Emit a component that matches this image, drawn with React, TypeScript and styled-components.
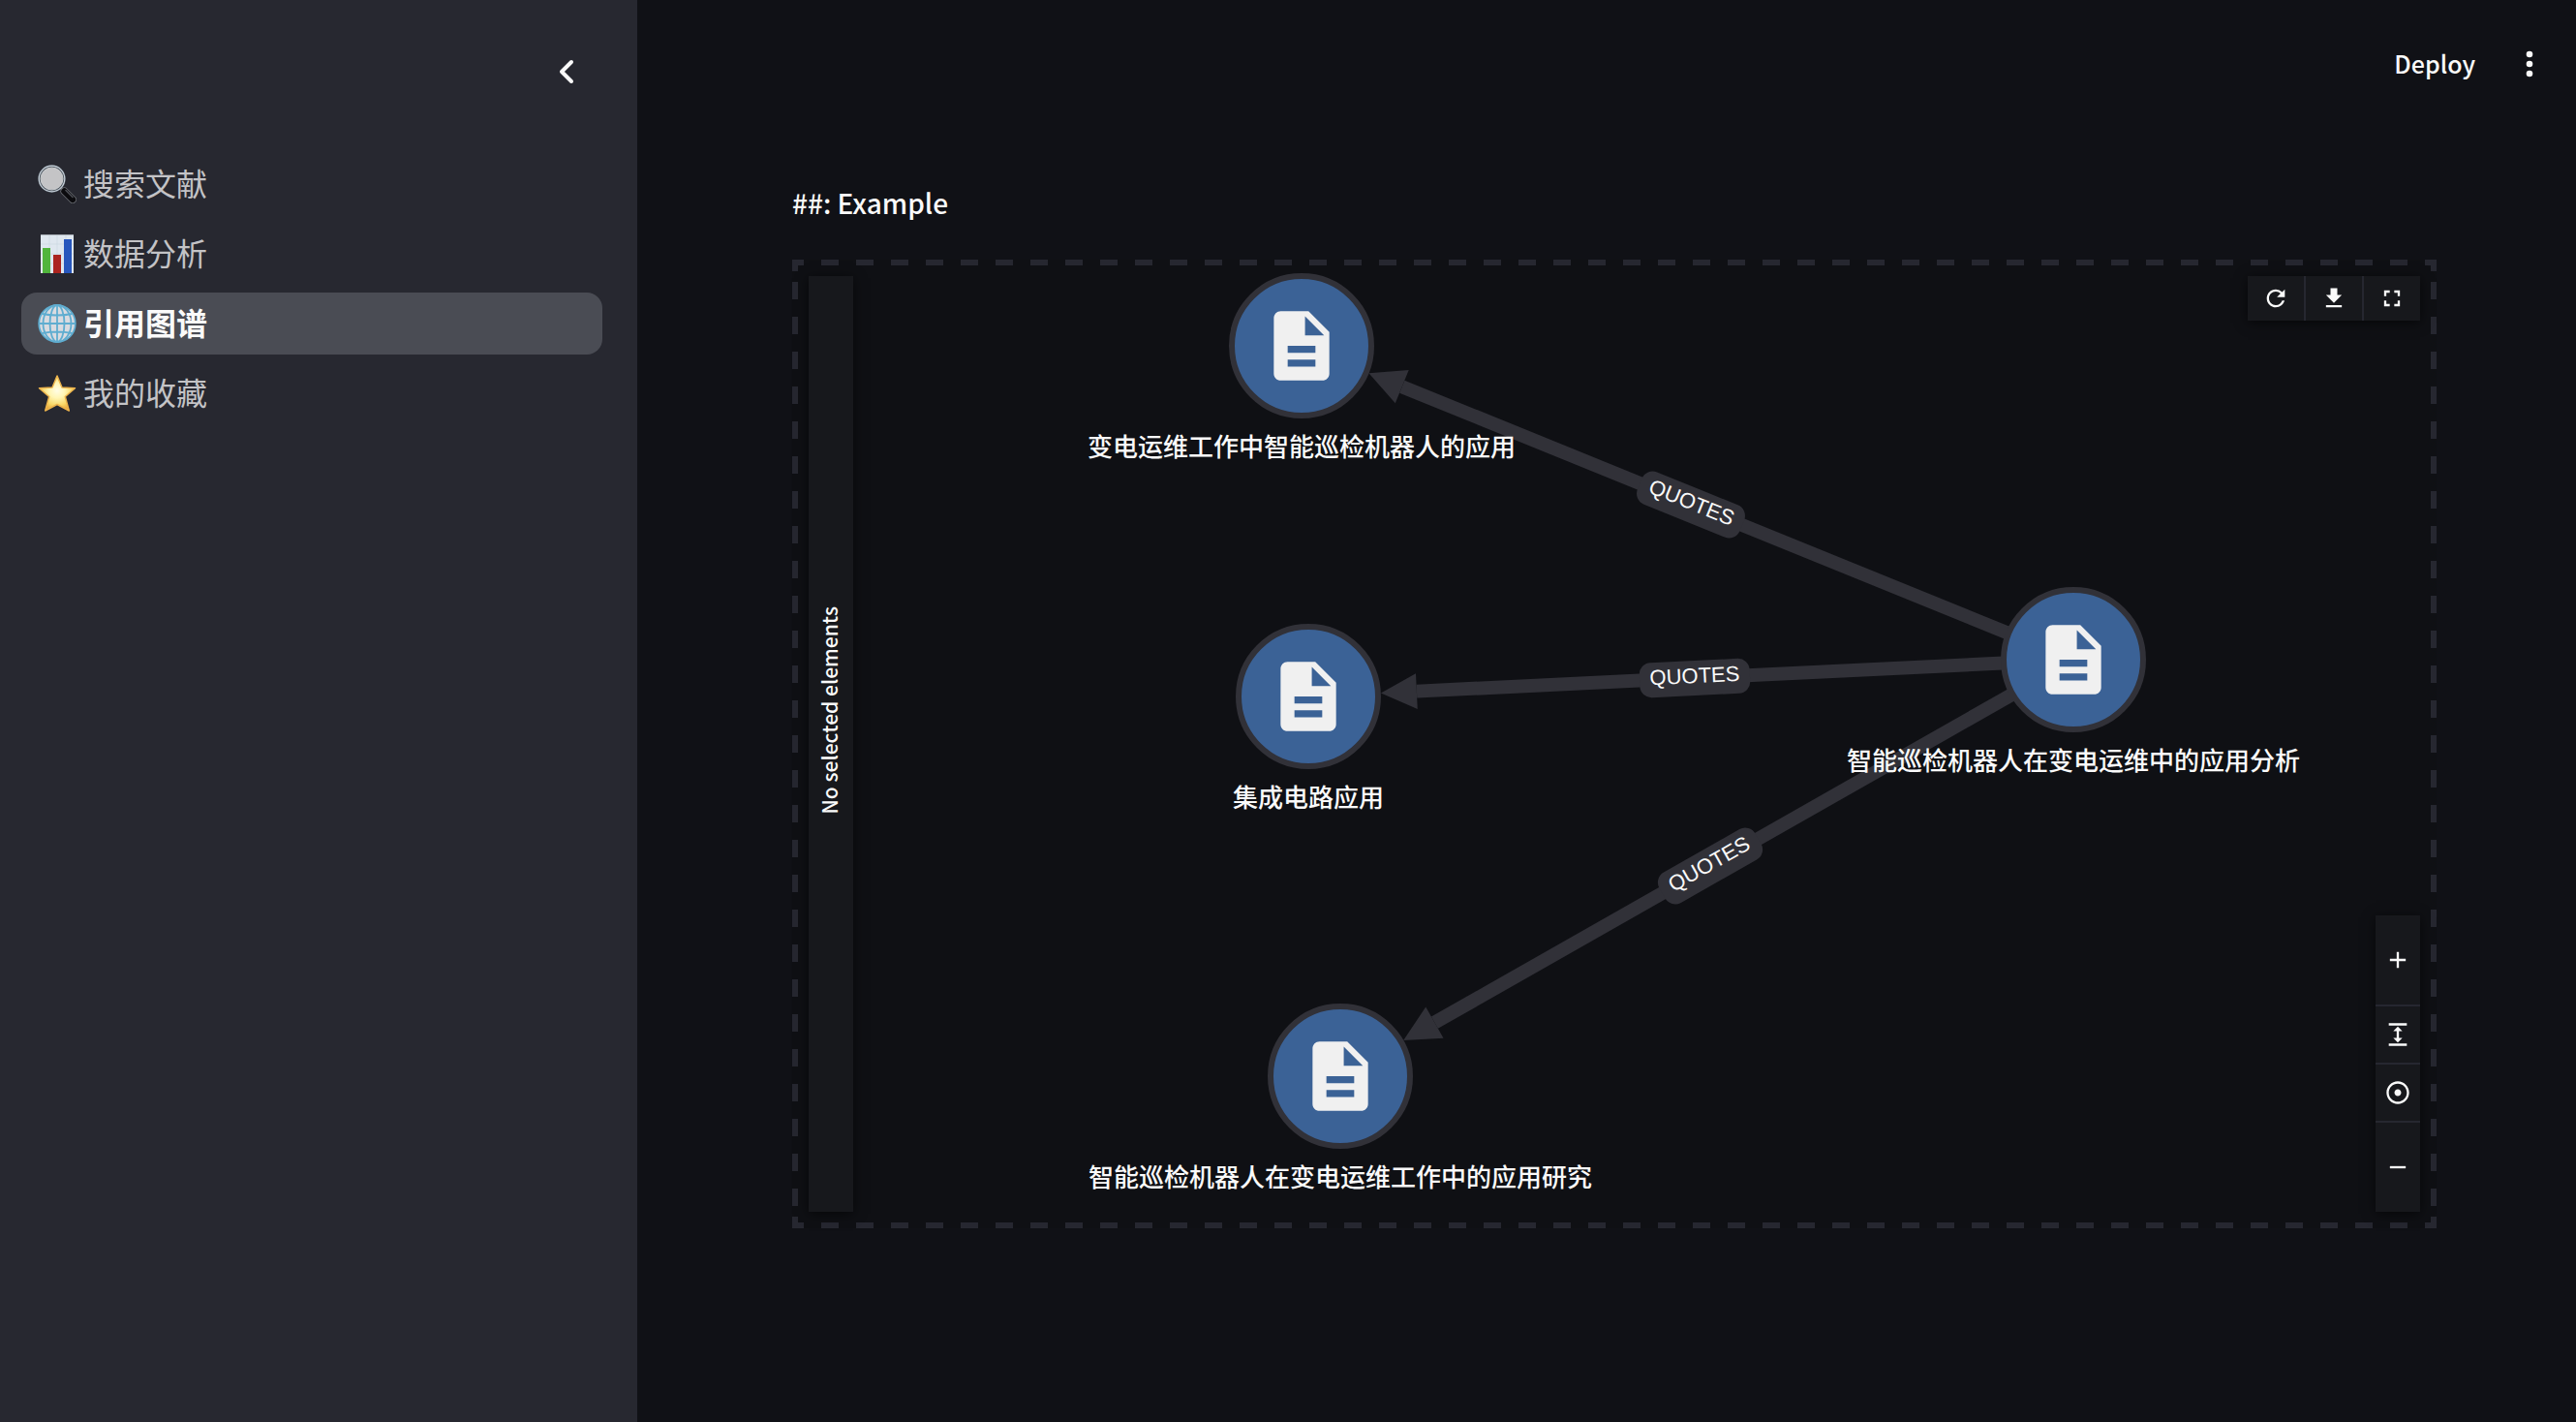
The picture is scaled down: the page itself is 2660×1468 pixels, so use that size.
import React from "react";
import styled, { createGlobalStyle } from "styled-components";
import { MdRefresh, MdDownload, MdFullscreen, MdAdd, MdExpand, MdAdjust, MdRemove, MdDescription } from "react-icons/md";

const color = {
  page: "#101116",
  canvas: "#0f1014",
  sidebar: "#272830",
  active: "#4a4c54",
  dash: "#262730",
  panel: "#17181c",
  edge: "#313138",
  node: "#3b6296",
  text: "#fafafa",
  muted: "#c3c3c6",
};

const Global = createGlobalStyle`
  *, *::before, *::after { box-sizing: border-box; }
  body { margin: 0; background: ${color.page}; color: ${color.text}; font-family: "Noto Sans CJK SC", "Noto Sans", sans-serif; font-weight: 500; }
  button { border: 0; padding: 0; background: none; color: inherit; font: inherit; cursor: pointer; }
`;

const Page = styled.div`
  display: grid;
  grid-template-columns: 658px minmax(0, 1fr);
  min-height: 100vh;
`;

const Sidebar = styled.aside`
  background: ${color.sidebar};
`;

const SidebarTop = styled.div`
  display: flex;
  justify-content: flex-end;
  padding: 50px 48px 0 0;
  height: 158px;
`;

const IconButton = styled.button`
  display: flex;
  align-items: center;
  justify-content: center;
  width: 48px;
  height: 48px;
`;

const Nav = styled.nav`
  display: flex;
  flex-direction: column;
  gap: 8px;
  padding: 0 36px 0 22px;
`;

const NavLink = styled.a<{ $active?: boolean }>`
  display: flex;
  align-items: center;
  gap: 7px;
  height: 64px;
  padding: 0 17px;
  border-radius: 16px;
  font-size: 32px;
  line-height: 48px;
  text-decoration: none;
  color: ${(p) => (p.$active ? color.text : color.muted)};
  font-weight: ${(p) => (p.$active ? 700 : 400)};
  background: ${(p) => (p.$active ? color.active : "transparent")};
`;

const NavText = styled.span`
  padding-bottom: 4px;
`;

const Emoji = styled.svg`
  width: 40px;
  height: 40px;
  flex: none;
`;

const Main = styled.main`
  display: flex;
  flex-direction: column;
`;

const Header = styled.header`
  display: flex;
  align-items: center;
  justify-content: flex-end;
  gap: 32px;
  height: 132px;
  padding: 0 24px;
`;

const DeployButton = styled.button`
  padding-bottom: 2px;
  font-size: 25px;
  line-height: 36px;
`;

const Content = styled.section`
  padding: 53px 144px 200px 160px;
`;

const Title = styled.p`
  margin: 0 0 35px;
  font-size: 28px;
  line-height: 48px;
`;

const solid = `linear-gradient(${color.dash}, ${color.dash})`;
const dashX = `linear-gradient(90deg, ${color.dash} 50%, transparent 50%)`;
const dashY = `linear-gradient(${color.dash} 50%, transparent 50%)`;

const Frame = styled.div`
  position: relative;
  display: flex;
  justify-content: space-between;
  height: 1000px;
  padding: 17px;
  background:
    ${solid} 0 0 / 6px 12px no-repeat,
    ${solid} 100% 0 / 6px 12px no-repeat,
    ${solid} 0 100% / 6px 12px no-repeat,
    ${solid} 100% 100% / 6px 12px no-repeat,
    ${dashX} -6px 0 / 36px 6px repeat-x,
    ${dashX} -6px 100% / 36px 6px repeat-x,
    ${dashY} 0 23px / 6px 36px repeat-y,
    ${dashY} 100% 23px / 6px 36px repeat-y,
    ${color.canvas};
`;

const Panel = styled.div`
  position: relative;
  background: ${color.panel};
  box-shadow: 0 2px 12px rgba(0, 0, 0, 0.6);
`;

const InfoPanel = styled(Panel)`
  display: flex;
  align-items: center;
  justify-content: center;
  width: 46px;
  padding: 0 4px 70px 0;
  font-size: 21px;
  line-height: 32px;
`;

const InfoText = styled.span`
  writing-mode: vertical-rl;
  transform: rotate(180deg);
`;

const Tools = styled.div`
  display: flex;
  flex-direction: column;
  align-items: flex-end;
  justify-content: space-between;
`;

const Toolbar = styled(Panel)<{ $vertical?: boolean }>`
  display: flex;
  flex-direction: ${(p) => (p.$vertical ? "column" : "row")};
  gap: 2px;
  background: ${color.dash};
`;

const ToolButton = styled.button<{ $wide?: boolean; $tall?: boolean }>`
  display: flex;
  align-items: center;
  justify-content: center;
  width: ${(p) => (p.$wide ? 58 : 46)}px;
  height: ${(p) => (p.$wide ? 46 : p.$tall ? 92 : 58)}px;
  background: ${color.panel};
  font-size: 28px;
`;

const EdgeLayer = styled.svg`
  position: absolute;
  top: 0;
  left: 0;
  width: 100%;
  height: 100%;
`;

const NodeMark = styled.div`
  position: absolute;
  display: flex;
  align-items: center;
  justify-content: center;
  width: 150px;
  height: 150px;
  border: 6px solid ${color.edge};
  border-radius: 50%;
  background: ${color.node};
  color: #f0f0f0;
  font-size: 86px;
  transform: translate(-50%, -50%);
`;

const NodeLabel = styled.span`
  position: absolute;
  transform: translate(-50%, -50%);
  font-size: 26px;
  line-height: 36px;
  white-space: nowrap;
`;

const EdgeLabel = styled.span`
  position: absolute;
  width: 114px;
  height: 36px;
  border-radius: 12px;
  background: ${color.edge};
  font: 22px/31px "Liberation Sans", Arial, sans-serif;
  text-align: center;
`;

const root = { x: 1323, y: 413, label: "智能巡检机器人在变电运维中的应用分析" };
const cited = [
  { x: 526, y: 89, label: "变电运维工作中智能巡检机器人的应用" },
  { x: 533, y: 451, label: "集成电路应用" },
  { x: 566, y: 843, label: "智能巡检机器人在变电运维工作中的应用研究" },
];
const RADIUS = 75;
const ARROW = 37;

const edges = cited.map((node) => {
  const dx = root.x - node.x;
  const dy = root.y - node.y;
  const length = Math.hypot(dx, dy);
  const ux = dx / length;
  const uy = dy / length;
  const tip = { x: node.x + ux * RADIUS, y: node.y + uy * RADIUS };
  const base = { x: tip.x + ux * ARROW, y: tip.y + uy * ARROW };
  const half = ARROW / 2;
  return {
    base,
    head: `${tip.x},${tip.y} ${base.x - uy * half},${base.y + ux * half} ${base.x + uy * half},${base.y - ux * half}`,
    middle: { x: (node.x + root.x) / 2 + ux * 4, y: (node.y + root.y) / 2 + uy * 4 },
    angle: (Math.atan2(dy, dx) * 180) / Math.PI,
  };
});

const SearchEmoji = () => (
  <Emoji viewBox="0 0 40 40" aria-hidden="true">
    <path d="M23 23l4 4" stroke="#a6a9ae" strokeWidth="3" />
    <path d="M27.500 27.500l8.500 8.500" stroke="#6b6e74" strokeWidth="8" strokeLinecap="round" />
    <path d="M27.500 27.500l8.500 8.500" stroke="#0b0b0e" strokeWidth="6.400" strokeLinecap="round" />
    <path d="M29 26.500l7 7" stroke="#4b4e54" strokeWidth="1.600" strokeLinecap="round" />
    <circle cx="14.500" cy="14.500" r="12.800" fill="#c4c4c6" stroke="#4e565f" strokeWidth="3" />
    <circle cx="14.500" cy="14.500" r="13.300" fill="none" stroke="#c9d3dc" strokeWidth="1.200" />
    <circle cx="14.500" cy="14.500" r="11.500" fill="none" stroke="#dcdee0" strokeWidth="0.800" />
  </Emoji>
);

const ChartEmoji = () => (
  <Emoji viewBox="0 0 40 40" aria-hidden="true">
    <path d="M3 0h34v40H3z" fill="#dfe7ef" />
    <path d="M3 10h34M3 20h34M3 30h34M12 0v40M20 0v40M29 0v40" stroke="#cbd8e3" strokeWidth="0.700" />
    <path d="M3 0.500h34" stroke="#a9afb6" />
    <path d="M5 14h8v26H5z" fill="#51b53d" />
    <path d="M16 21h8v19h-8z" fill="#ab241f" />
    <path d="M27 5h8v35h-8z" fill="#2857bd" />
  </Emoji>
);

const GlobeEmoji = () => (
  <Emoji viewBox="0 0 40 40" aria-hidden="true">
    <circle cx="20" cy="20" r="19" fill="#d9dbe0" />
    <g fill="none" stroke="#5fadd0" strokeWidth="1.800">
      <circle cx="20" cy="20" r="18.800" />
      <ellipse cx="20" cy="20" rx="7.500" ry="19" />
      <ellipse cx="20" cy="20" rx="14.500" ry="19" />
      <path d="M20 1v38M1 20h38M4.500 10q15.500 3 31 0M4.500 30q15.500-3 31 0" />
    </g>
  </Emoji>
);

const StarEmoji = () => (
  <Emoji viewBox="0 0 40 40" aria-hidden="true">
    <defs>
      <radialGradient id="star-fill" cx="50%" cy="42%" r="62%">
        <stop offset="0" stopColor="#fffde6" />
        <stop offset="0.350" stopColor="#fff6b4" />
        <stop offset="0.700" stopColor="#f9d765" />
        <stop offset="1" stopColor="#e39a33" />
      </radialGradient>
    </defs>
    <path d="M20 2l5 12 13.500.800L28.300 23.500 32.300 38 20 31.500 7.700 38l4-14.500L1.500 14.800 15 14z" fill="url(#star-fill)" stroke="#edb44c" strokeWidth="1.500" strokeLinejoin="round" />
  </Emoji>
);

const links = [
  { label: "搜索文献", Icon: SearchEmoji },
  { label: "数据分析", Icon: ChartEmoji },
  { label: "引用图谱", Icon: GlobeEmoji, active: true },
  { label: "我的收藏", Icon: StarEmoji },
];

export default function App() {
  return (
    <Page>
      <Global />
      <Sidebar>
        <SidebarTop>
          <IconButton aria-label="Collapse sidebar">
            <svg width="24" height="28" viewBox="0 0 24 28" fill="none" stroke="currentColor" strokeWidth="4" strokeLinecap="round" strokeLinejoin="round">
              <path d="M16 4L6 14l10 10" />
            </svg>
          </IconButton>
        </SidebarTop>
        <Nav>
          {links.map(({ label, Icon, active }) => (
            <NavLink key={label} href="#" $active={active} aria-current={active ? "page" : undefined}>
              <Icon />
              <NavText>{label}</NavText>
            </NavLink>
          ))}
        </Nav>
      </Sidebar>
      <Main>
        <Header>
          <DeployButton>Deploy</DeployButton>
          <IconButton aria-label="Main menu">
            <svg width="8" height="28" viewBox="0 0 8 28" fill="currentColor">
              <circle cx="4" cy="4" r="3.300" />
              <circle cx="4" cy="14" r="3.300" />
              <circle cx="4" cy="24" r="3.300" />
            </svg>
          </IconButton>
        </Header>
        <Content>
          <Title>##: Example</Title>
          <Frame>
            <EdgeLayer aria-hidden="true">
              {edges.map((edge, i) => (
                <g key={i} fill={color.edge} stroke="none">
                  <line x1={root.x} y1={root.y} x2={edge.base.x} y2={edge.base.y} stroke={color.edge} strokeWidth="14" />
                  <polygon points={edge.head} />
                </g>
              ))}
            </EdgeLayer>
            {[root, ...cited].map((node) => (
              <React.Fragment key={node.label}>
                <NodeMark style={{ left: node.x, top: node.y }}>
                  <MdDescription />
                </NodeMark>
                <NodeLabel style={{ left: node.x, top: node.y + 103 }}>{node.label}</NodeLabel>
              </React.Fragment>
            ))}
            {edges.map((edge, i) => (
              <EdgeLabel
                key={i}
                style={{ left: edge.middle.x, top: edge.middle.y, transform: `translate(-50%, -50%) rotate(${edge.angle}deg)` }}
              >
                QUOTES
              </EdgeLabel>
            ))}
            <InfoPanel>
              <InfoText>No selected elements</InfoText>
            </InfoPanel>
            <Tools>
              <Toolbar>
                <ToolButton $wide aria-label="Refresh"><MdRefresh /></ToolButton>
                <ToolButton $wide aria-label="Download"><MdDownload /></ToolButton>
                <ToolButton $wide aria-label="Fullscreen"><MdFullscreen /></ToolButton>
              </Toolbar>
              <Toolbar $vertical>
                <ToolButton $tall aria-label="Zoom in"><MdAdd /></ToolButton>
                <ToolButton aria-label="Fit"><MdExpand /></ToolButton>
                <ToolButton aria-label="Center"><MdAdjust /></ToolButton>
                <ToolButton $tall aria-label="Zoom out"><MdRemove /></ToolButton>
              </Toolbar>
            </Tools>
          </Frame>
        </Content>
      </Main>
    </Page>
  );
}
